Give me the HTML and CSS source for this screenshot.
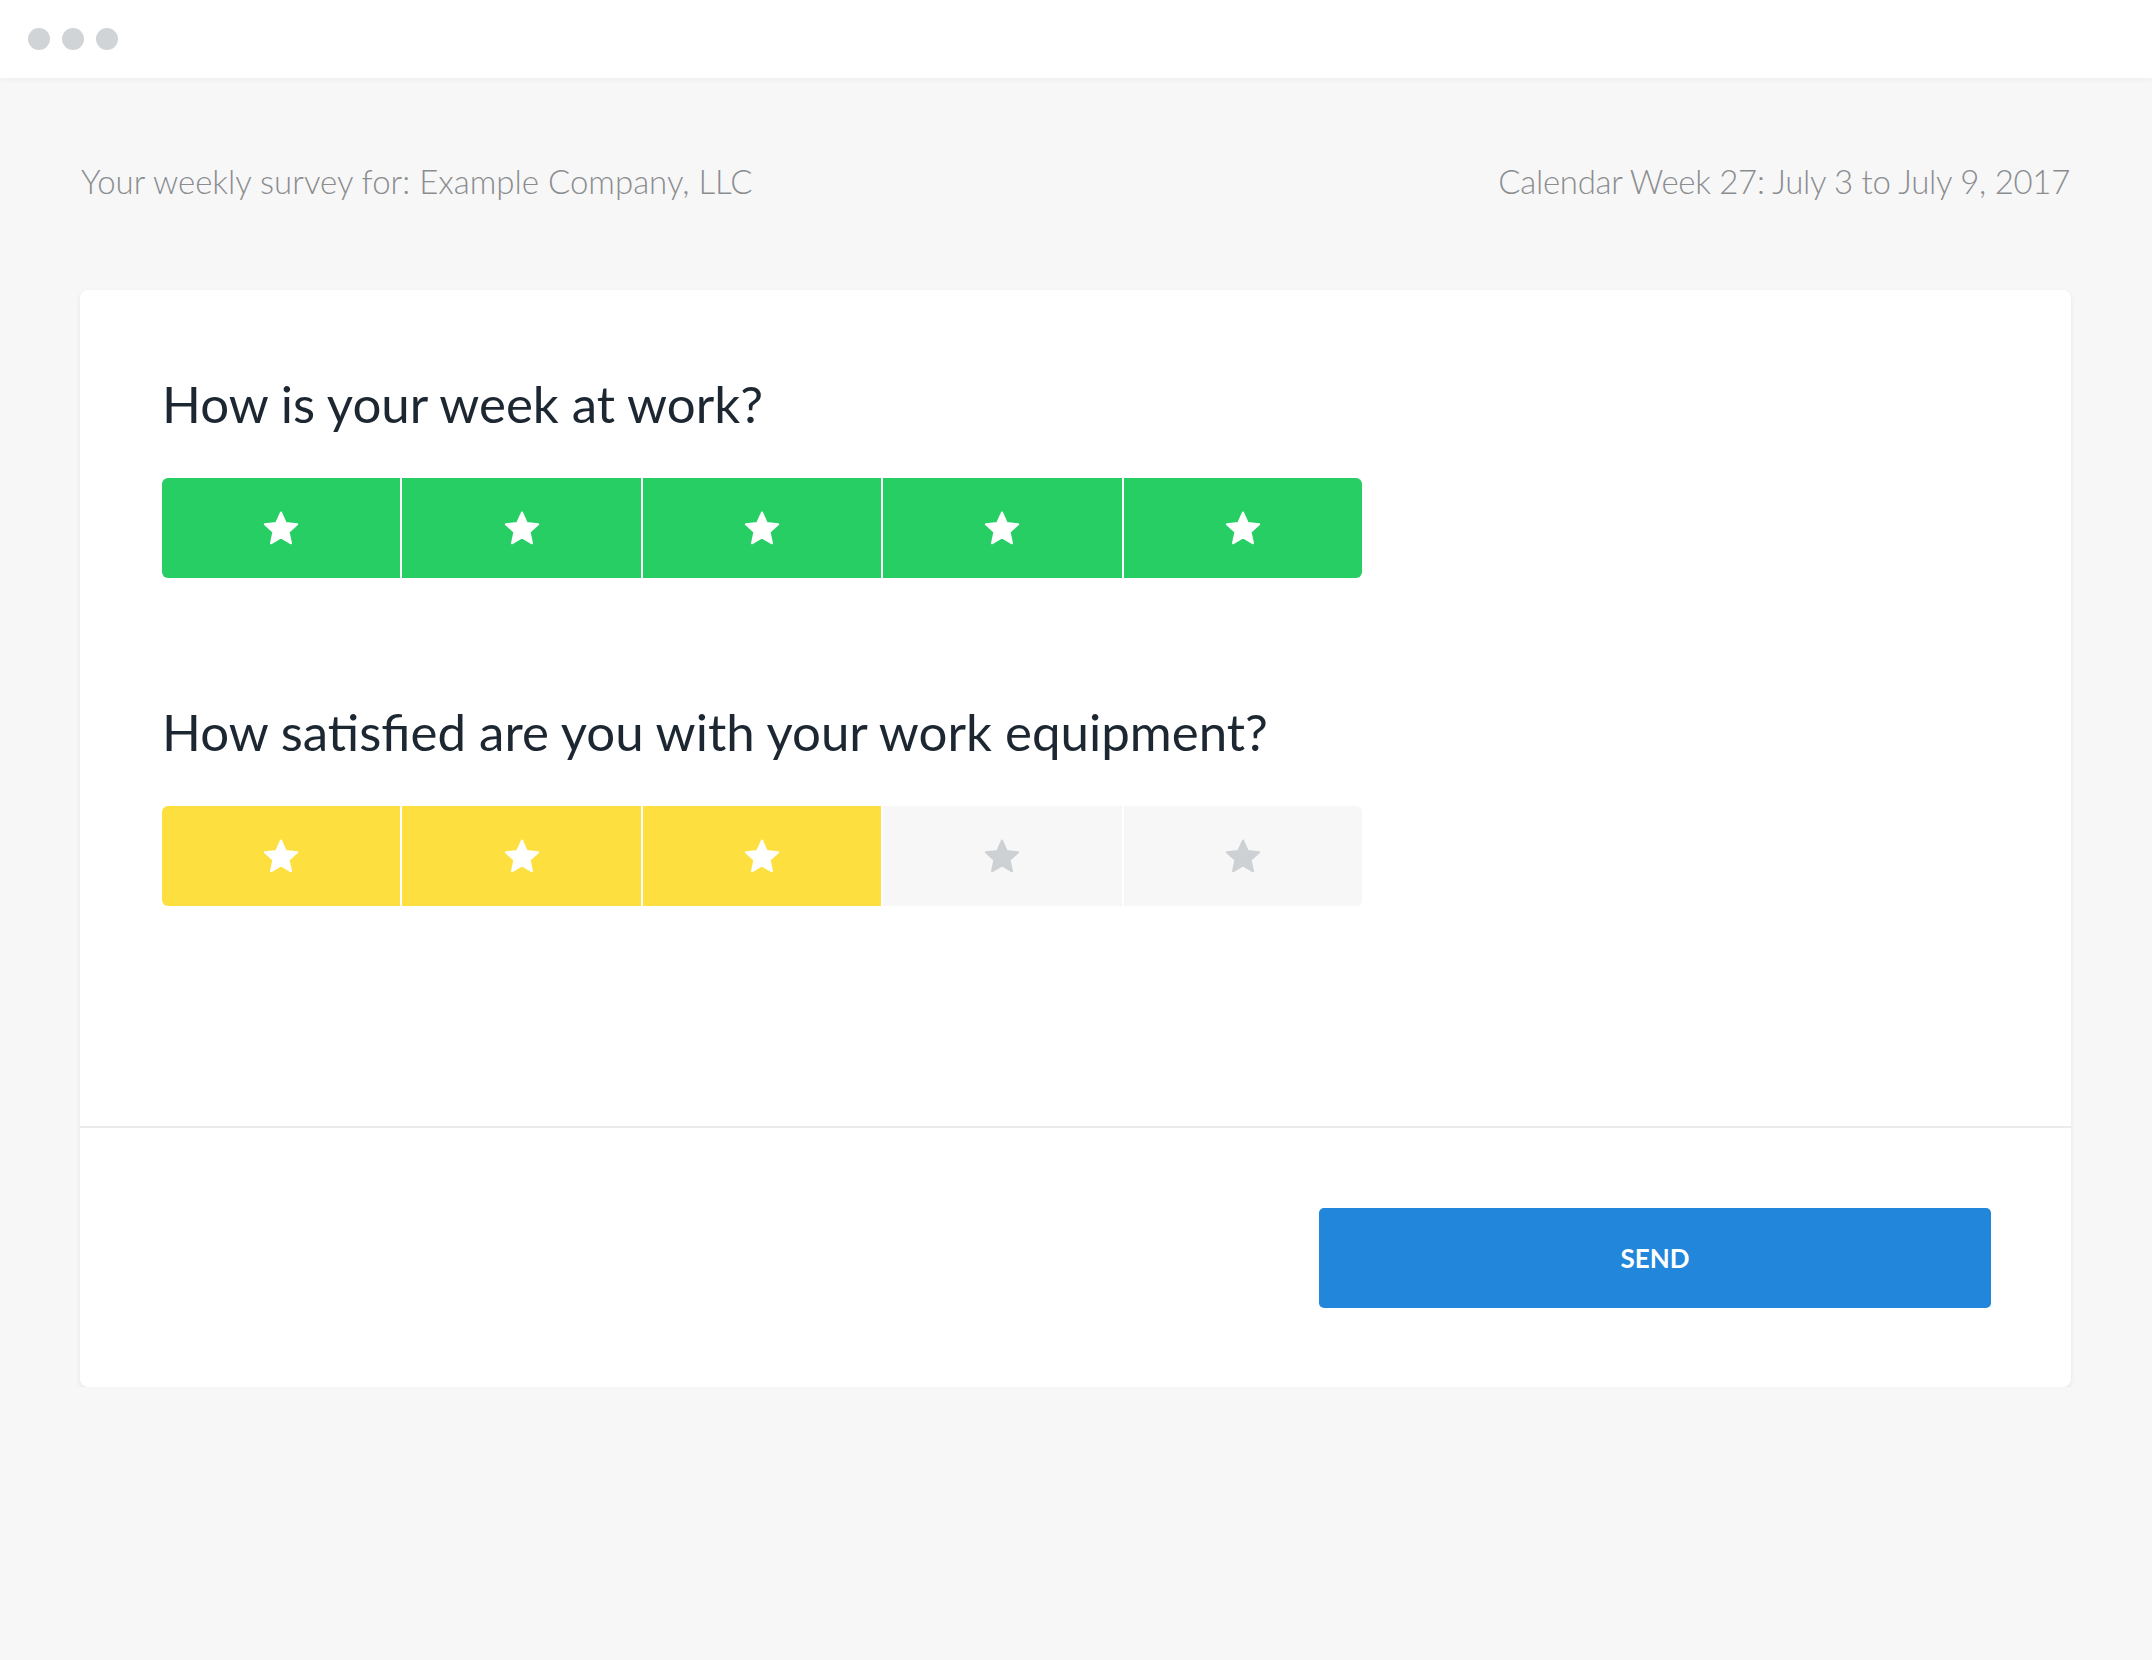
FILE: index.html
```html
<!DOCTYPE html>
<html lang="en">
<head>
  <meta charset="UTF-8">
  <meta name="viewport" content="width=device-width, initial-scale=1.0">
  <title>Weekly Survey</title>
  <link rel="stylesheet" href="styles.css">
</head>
<body>
  <svg width="0" height="0" class="defs">
    <symbol id="star" viewBox="0 0 36 34">
      <polygon points="18,1.5 22.7,12 34.2,13.3 25.6,21 28,32.3 18,26.5 8,32.3 10.4,21 1.8,13.3 13.3,12"
               fill="currentColor" stroke="currentColor" stroke-width="2" stroke-linejoin="round"/>
    </symbol>
  </svg>

  <!-- window chrome -->
  <div class="titlebar">
    <span class="dot"></span>
    <span class="dot"></span>
    <span class="dot"></span>
  </div>

  <main class="page">
    <div class="survey-meta">
      <span>Your weekly survey for: Example Company, LLC</span>
      <span>Calendar Week 27: July 3 to July 9, 2017</span>
    </div>

    <form class="card">
      <div class="card-body">
        <div class="question">
          <h2>How is your week at work?</h2>
          <div class="rating rating-green">
            <button type="button" class="seg on"><svg class="star"><use href="#star"/></svg></button>
            <button type="button" class="seg on"><svg class="star"><use href="#star"/></svg></button>
            <button type="button" class="seg on"><svg class="star"><use href="#star"/></svg></button>
            <button type="button" class="seg on"><svg class="star"><use href="#star"/></svg></button>
            <button type="button" class="seg on"><svg class="star"><use href="#star"/></svg></button>
          </div>
        </div>

        <div class="question">
          <h2>How satisfied are you with your work equipment?</h2>
          <div class="rating rating-yellow">
            <button type="button" class="seg on"><svg class="star"><use href="#star"/></svg></button>
            <button type="button" class="seg on"><svg class="star"><use href="#star"/></svg></button>
            <button type="button" class="seg on"><svg class="star"><use href="#star"/></svg></button>
            <button type="button" class="seg"><svg class="star"><use href="#star"/></svg></button>
            <button type="button" class="seg"><svg class="star"><use href="#star"/></svg></button>
          </div>
        </div>
      </div>

      <div class="card-footer">
        <button type="button" class="send">SEND</button>
      </div>
    </form>
  </main>
</body>
</html>
```

FILE: styles.css
```css
body {
  margin: 0;
  background-color: #f7f7f7;
  font-family: 'Lato', 'Open Sans', sans-serif;
  color: #1d2731;
}

.defs {
  position: absolute;
}

.titlebar {
  height: 78px;
  background-color: #fff;
  box-shadow: 0 2px 6px rgba(0, 0, 0, 0.04);
  display: flex;
  align-items: center;
  gap: 12px;
  padding-left: 28px;
}

.dot {
  width: 22px;
  height: 22px;
  border-radius: 50%;
  background-color: #d1d4d7;
}

.page {
  width: 1991px;
  margin-left: 80px;
  padding-top: 84px;
}

.survey-meta {
  display: flex;
  justify-content: space-between;
  font-size: 33px;
  font-weight: 300;
  line-height: 38px;
  color: #8a8d90;
  padding: 0 1px;
}

.survey-meta span:last-child {
  letter-spacing: -0.3px;
}

.card {
  margin-top: 90px;
  background-color: #fff;
  border-radius: 8px;
  box-shadow: 0 2px 5px rgba(0, 0, 0, 0.08);
}

.card-body {
  padding: 83px 82px 220px;
}

.question + .question {
  margin-top: 123px;
}

.question h2 {
  margin: 0 0 43px;
  font-size: 51px;
  font-weight: 400;
  line-height: 62px;
  color: #1d2731;
}

.rating {
  display: flex;
  gap: 2px;
  width: 1200px;
  height: 100px;
}

.seg {
  flex: 1;
  border: none;
  padding: 0;
  margin: 0;
  display: flex;
  align-items: center;
  justify-content: center;
  background-color: #f7f7f7;
  color: #ced1d4;
  cursor: pointer;
}

.seg:first-child {
  border-radius: 6px 0 0 6px;
}

.seg:last-child {
  border-radius: 0 6px 6px 0;
}

.rating-green .seg.on {
  background-color: #26ce64;
  color: #fff;
}

.rating-yellow .seg.on {
  background-color: #fddf3f;
  color: #fff;
}

.star {
  width: 36px;
  height: 34px;
}

.card-footer {
  border-top: 2px solid #ebebeb;
  padding: 80px 80px 79px;
  display: flex;
  justify-content: flex-end;
}

.send {
  width: 672px;
  height: 100px;
  border: none;
  border-radius: 5px;
  background-color: #2286db;
  color: #fff;
  font-family: 'Lato', sans-serif;
  font-size: 26px;
  font-weight: 700;
  cursor: pointer;
}
```
